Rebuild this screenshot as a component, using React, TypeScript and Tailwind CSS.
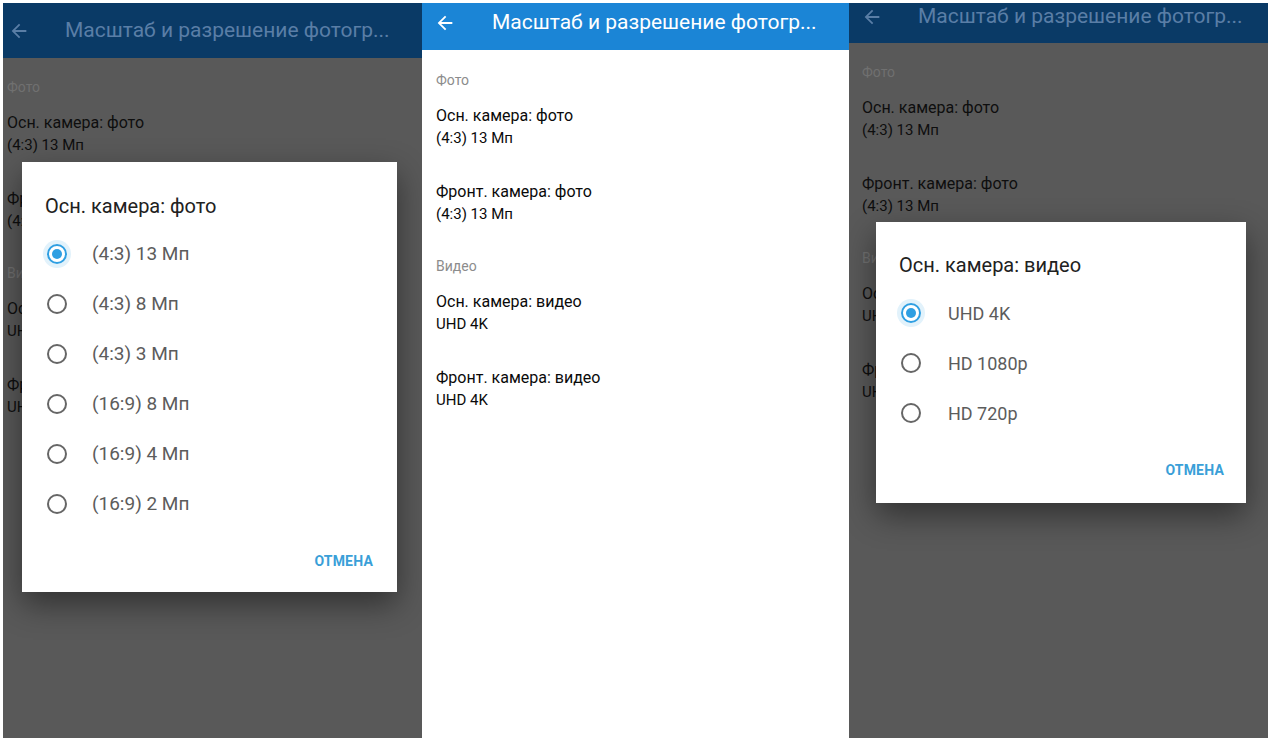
import React from "react";

const Arrow = ({ color, size = 22 }: { color: string; size?: number }) => (
  <svg width={size} height={size} viewBox="0 0 24 24" fill={color}>
    <path d="M20 11H7.83l5.59-5.59L12 4l-8 8 8 8 1.41-1.41L7.83 13H20v-2z" />
  </svg>
);

type Item = { title: string; sub: string };
const photo: Item[] = [
  { title: "Осн. камера: фото", sub: "(4:3) 13 Мп" },
  { title: "Фронт. камера: фото", sub: "(4:3) 13 Мп" },
];
const video: Item[] = [
  { title: "Осн. камера: видео", sub: "UHD 4K" },
  { title: "Фронт. камера: видео", sub: "UHD 4K" },
];

function List({ dim, label, items }: { dim: boolean; label: string; items: Item[] }) {
  return (
    <div>
      <div className={"h-[16px] leading-[16px] text-[14px] mb-[18px] " + (dim ? "text-[#707070]" : "text-[#8c8c8c]")}>
        {label}
      </div>
      {items.map((it) => (
        <div key={it.title} className="h-[76px]">
          <div className={"text-[16px] leading-[20px] " + (dim ? "text-[#0e0e0e]" : "text-[#0a0a0a]")}>{it.title}</div>
          <div className={"text-[15px] leading-[24px] " + (dim ? "text-[#0e0e0e]" : "text-[#0a0a0a]")}>{it.sub}</div>
        </div>
      ))}
    </div>
  );
}

function Radio({ on }: { on: boolean }) {
  return on ? (
    <div className="w-[20px] h-[20px] rounded-full border-2 border-[#2f9fe2] flex items-center justify-center ring-4 ring-[#e2f2fb] shrink-0">
      <div className="w-[10px] h-[10px] rounded-full bg-[#2f9fe2]" />
    </div>
  ) : (
    <div className="w-[20px] h-[20px] rounded-full border-2 border-[#666] shrink-0" />
  );
}

function Dialog({ title, options, gapClass, textClass }: { title: string; options: string[]; gapClass: string; textClass: string }) {
  return (
    <>
      <div className="pl-[23px] text-[20px] leading-[28px] text-[#212121]">{title}</div>
      <div className="mt-[9px]">
        {options.map((o, i) => (
          <div key={o} className={"h-[50px] flex items-center pl-[25px] " + gapClass}>
            <Radio on={i === 0} />
            <span className={"text-[#5c5c5c] " + textClass}>{o}</span>
          </div>
        ))}
      </div>
    </>
  );
}

export default function App() {
  return (
    <div className="w-[1272px] h-[742px] bg-white pt-[3px] flex overflow-hidden [font-family:Roboto,'Noto_Sans',sans-serif]">
      {/* Left panel */}
      <div className="relative ml-[3px] w-[419px] h-[735px] bg-[#595959] flex flex-col overflow-hidden">
        <div className="h-[55px] bg-[#0a3a66] flex items-center shrink-0">
          <div className="w-[62px] pl-[5px] flex"><Arrow color="#5a7ea6" /></div>
          <div className="text-[21px] text-[#5a7ea6] whitespace-nowrap">Масштаб и разрешение фотогр...</div>
        </div>
        <div className="pl-[4px] pt-[21px]">
          <List dim label="Фото" items={photo} />
          <List dim label="Видео" items={video} />
        </div>
        <div className="absolute left-[19px] top-[159px] w-[375px] h-[430px] bg-white shadow-[0_12px_30px_rgba(0,0,0,0.45)] pt-[30px] flex flex-col">
          <Dialog
            title="Осн. камера: фото"
            options={["(4:3) 13 Мп", "(4:3) 8 Мп", "(4:3) 3 Мп", "(16:9) 8 Мп", "(16:9) 4 Мп", "(16:9) 2 Мп"]}
            gapClass="gap-[25px]"
            textClass="text-[19px]"
          />
          <div className="mt-[14px] h-[36px] flex items-center justify-end pr-[24px]">
            <span className="text-[14px] font-bold text-[#3a9fd8] tracking-[0.2px]">ОТМЕНА</span>
          </div>
        </div>
      </div>

      {/* Middle panel */}
      <div className="w-[427px] h-[735px] bg-white flex flex-col overflow-hidden">
        <div className="h-[47px] bg-[#1b85d6] flex items-center pb-[8px] shrink-0">
          <div className="w-[70px] pl-[12px] flex"><Arrow color="#ffffff" /></div>
          <div className="text-[21px] text-white whitespace-nowrap">Масштаб и разрешение фотогр...</div>
        </div>
        <div className="pl-[14px] pt-[22px]">
          <List dim={false} label="Фото" items={photo} />
          <List dim={false} label="Видео" items={video} />
        </div>
      </div>

      {/* Right panel */}
      <div className="relative w-[419px] h-[735px] bg-[#595959] flex flex-col overflow-hidden">
        <div className="h-[40px] bg-[#0a3a66] flex items-center pb-[12px] shrink-0">
          <div className="w-[69px] pl-[12px] flex"><Arrow color="#5a7ea6" /></div>
          <div className="text-[21px] text-[#5a7ea6] whitespace-nowrap">Масштаб и разрешение фотогр...</div>
        </div>
        <div className="pl-[13px] pt-[21px]">
          <List dim label="Фото" items={photo} />
          <List dim label="Видео" items={video} />
        </div>
        <div className="absolute left-[27px] top-[219px] w-[370px] h-[281px] bg-white shadow-[0_12px_30px_rgba(0,0,0,0.45)] pt-[29px] flex flex-col">
          <Dialog title="Осн. камера: видео" options={["UHD 4K", "HD 1080p", "HD 720p"]} gapClass="gap-[27px]" textClass="text-[18px]" />
          <div className="mt-[14px] h-[36px] flex items-center justify-end pr-[22px]">
            <span className="text-[14px] font-bold text-[#3a9fd8] tracking-[0.2px]">ОТМЕНА</span>
          </div>
        </div>
      </div>
    </div>
  );
}
